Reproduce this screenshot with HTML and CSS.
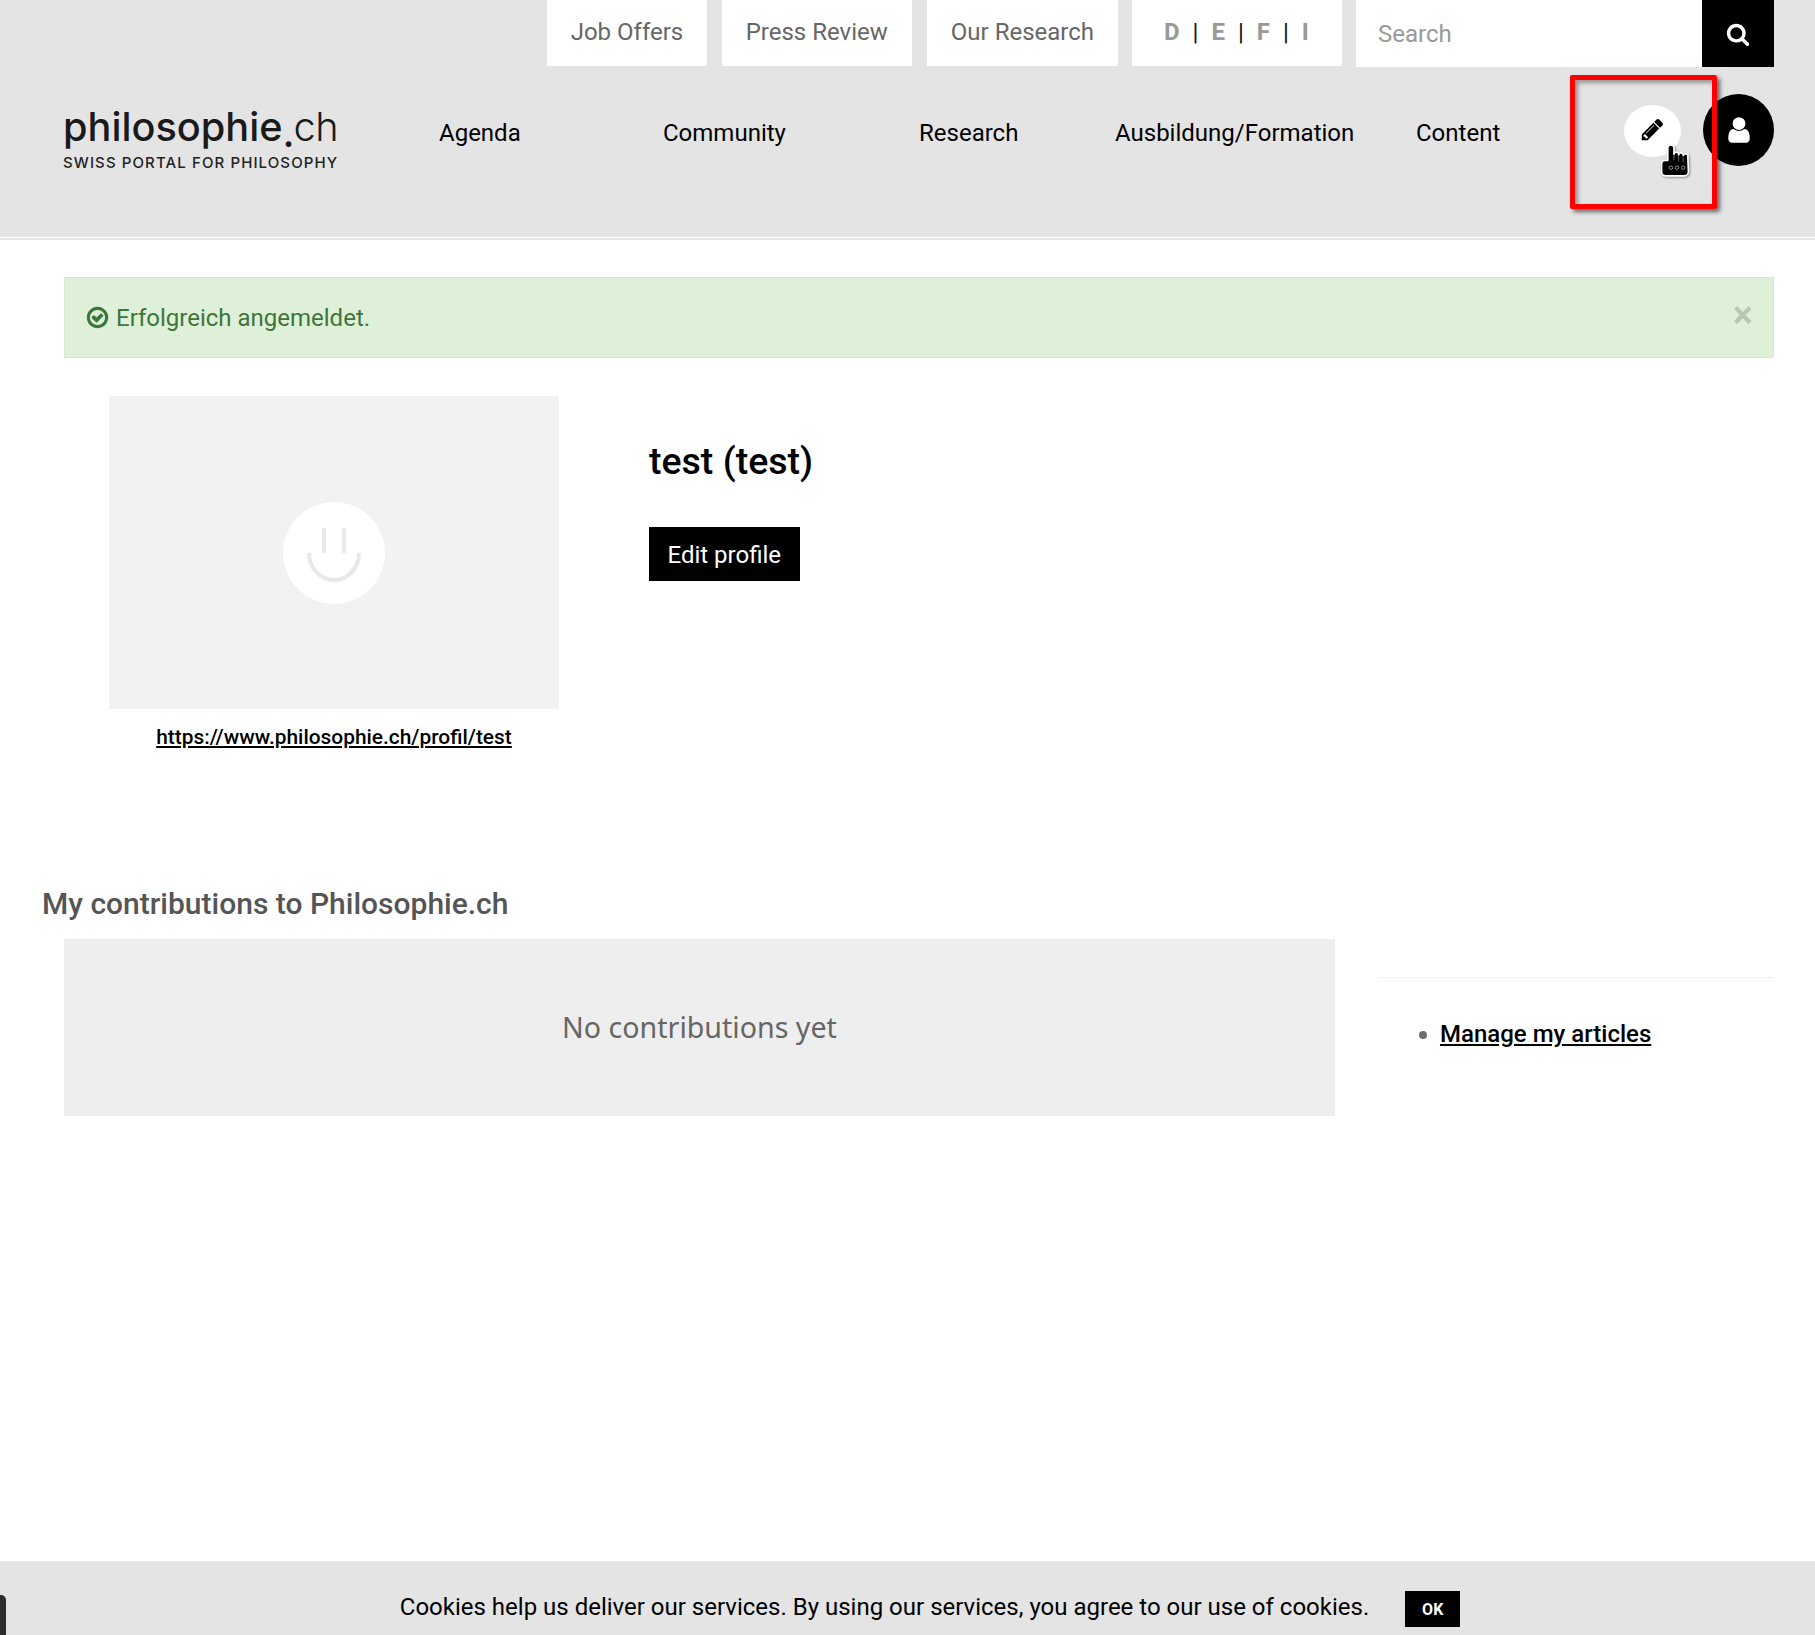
FILE: index.html
```html
<!DOCTYPE html>
<html><head><meta charset="UTF-8" /><title>philosophie.ch</title><link rel="stylesheet" href="styles.css"></head>
<body>
<header class="site-header">
	<div class="top-row">
		<a class="tab">Job Offers</a>
		<a class="tab">Press Review</a>
		<a class="tab">Our Research</a>
		<div class="tab langs"><b>D</b><i>|</i><b>E</b><i>|</i><b>F</b><i>|</i><b>I</b></div>
		<form class="search">
			<input class="search-input" type="text" placeholder="Search">
			<button class="search-btn" type="button">
				<svg width="24" height="24" viewBox="0 0 1792 1792"><path fill="#fff" d="M1216 832q0-185-131.5-316.5t-316.5-131.5-316.5 131.5-131.5 316.5 131.5 316.5 316.5 131.5 316.5-131.5 131.5-316.5zm512 832q0 52-38 90t-90 38q-54 0-90-38l-343-342q-179 124-399 124-143 0-273.5-55.5t-225-150-150-225-55.5-273.5 55.5-273.5 150-225 225-150 273.5-55.5 273.5 55.5 225 150 150 225 55.5 273.5q0 220-124 399l343 343q37 37 37 90z"/></svg>
			</button>
		</form>
	</div>
	<div class="main-row">
		<a class="logo">
			<span class="logo-name">philosophie<span class="logo-dot">.</span><span class="logo-thin">ch</span></span>
			<span class="logo-tag">SWISS PORTAL FOR PHILOSOPHY</span>
		</a>
		<nav class="nav">
			<a>Agenda</a>
			<a>Community</a>
			<a>Research</a>
			<a>Ausbildung/Formation</a>
			<a>Content</a>
		</nav>
		<a class="edit-btn">
			<svg width="25" height="25" viewBox="0 0 1792 1792"><path d="M491 1536l91-91-235-235-91 91v107h128v128h107zm523-928q0-22-22-22-10 0-17 7l-542 542q-7 7-7 17 0 22 22 22 10 0 17-7l542-542q7-7 7-17zm-54-192l416 416-832 832h-416v-416zm683 96q0 53-37 90l-166 166-416-416 166-165q36-38 90-38 53 0 91 38l235 234q37 39 37 91z"/></svg>
		</a>
		<a class="user-btn">
			<svg width="30" height="30" viewBox="0 0 1792 1792"><path fill="#fff" d="M1536 1399q0 109-62.5 187t-150.5 78h-854q-88 0-150.5-78t-62.5-187q0-85 8.5-160.5t31.5-152 58.5-131 94-89 134.5-34.5q131 128 313 128t313-128q76 0 134.5 34.5t94 89 58.5 131 31.5 152 8.5 160.5zm-256-887q0 159-112.5 271.5t-271.5 112.5-271.5-112.5-112.5-271.5 112.5-271.5 271.5-112.5 271.5 112.5 112.5 271.5z"/></svg>
		</a>
	</div>
	<!-- annotation from the screenshot -->
	<div class="red-box"></div>
	<svg class="hand" width="33" height="34" viewBox="0 0 31 33">
		<path fill="#000" stroke="#fff" stroke-width="1.6" stroke-linejoin="round" d="M8 4a3 3 0 0 1 6 0V10a2.200 2.200 0 0 1 4.500.5a2.200 2.200 0 0 1 4.500.7a2.200 2.200 0 0 1 4.500 1.500L28 27a4 4 0 0 1-4 4H6a4 4 0 0 1-4-4V19a3 3 0 0 1 3-3h3z"/>
		<path fill="none" stroke="#777" stroke-width=".8" d="M14 11v5M18.500 12v5M23 13v5"/>
		<circle cx="11" cy="23" r="1.700" fill="none" stroke="#aaa" stroke-width=".8"/><circle cx="17" cy="23" r="1.700" fill="none" stroke="#aaa" stroke-width=".8"/><circle cx="23" cy="23" r="1.700" fill="none" stroke="#aaa" stroke-width=".8"/>
	</svg>
</header>
<div class="header-rule"></div>

<div class="alert">
	<svg width="25" height="25" viewBox="0 0 1792 1792"><path fill="#3c763d" d="M1299 813l-422 422q-19 19-45 19t-45-19l-294-294q-19-19-19-45t19-45l102-102q19-19 45-19t45 19l147 147 275-275q19-19 45-19t45 19l102 102q19 19 19 45t-19 45zm141 83q0-148-73-273t-198-198-273-73-273 73-198 198-73 273 73 273 198 198 273 73 273-73 198-198 73-273zm224 0q0 209-103 385.5t-279.5 279.5-385.5 103-385.5-103-279.5-279.5-103-385.5 103-385.5 279.5-279.5 385.5-103 385.5 103 279.5 279.5 103 385.5z"/></svg>
	<span>Erfolgreich angemeldet.</span>
	<span class="alert-close">×</span>
</div>

<section class="profile">
	<div class="profile-left">
		<div class="photo">
			<div class="photo-face">
				<svg width="58" height="54" viewBox="0 0 58 54" fill="none" stroke="#e8e8e8" stroke-width="4">
					<path d="M19 0v25M39 0v25M4 25a25 27 0 0 0 50 0"/>
				</svg>
			</div>
		</div>
		<a class="profile-url">https://www.philosophie.ch/profil/test</a>
	</div>
	<div class="profile-right">
		<h1 class="profile-name">test (test)</h1>
		<a class="btn-edit">Edit profile</a>
	</div>
</section>

<h2 class="contrib-title">My contributions to Philosophie.ch</h2>
<section class="contrib">
	<div class="contrib-empty">No contributions yet</div>
	<aside class="contrib-side">
		<ul>
			<li><a>Manage my articles</a></li>
		</ul>
	</aside>
</section>

<div class="cookie-bar">
	<div class="cookie-tab"></div>
	<span>Cookies help us deliver our services. By using our services, you agree to our use of cookies.</span>
	<a class="cookie-ok">OK</a>
</div>
</body></html>
```

FILE: styles.css
```css
* { box-sizing: border-box; }
html, body { margin: 0; padding: 0; }
body { background: #fff; font-family: Roboto, sans-serif; font-size: 24px; color: #000; height: 1635px; overflow: hidden; }

.site-header { position: relative; height: 237px; background: #e4e4e4; }
.header-rule { height: 2px; margin-top: 1px; background: #e4e4e4; }

.top-row { display: flex; justify-content: flex-end; padding-right: 41px; height: 67px; }
.tab { display: flex; align-items: center; height: 66px; padding: 0 24px 2px; margin-right: 15px; background: #fff; color: #666; }
.tab:nth-child(1) { padding: 0 23.5px 2px; }
.tab:nth-child(3) { margin-right: 14px; }
.langs { width: 210px; padding-left: 32px; margin-right: 14px; gap: 13px; }
.langs b { color: #999; font-weight: 700; }
.langs i { font-style: normal; color: #111; }
.search { display: flex; margin: 0; }
.search-input { width: 346px; height: 67px; border: 0; padding: 0 22px; font: 24px Roboto, sans-serif; background: #fff; }
.search-input::placeholder { color: #999; opacity: 1; }
.search-btn { width: 72px; height: 67px; border: 0; padding: 0; background: #000; display: flex; align-items: center; justify-content: center; }

.main-row { display: flex; padding: 41px 41px 0 63px; }
.logo { display: flex; flex-direction: column; width: 376px; margin-top: -3px; margin-bottom: 3px; }
.logo-name { font-family: Inter, sans-serif; font-size: 39.7px; line-height: 44px; font-weight: 500; color: #1a1a1a; white-space: nowrap; }
.logo-dot { display: inline-block; width: 11px; transform: translateY(6px); }
.logo-thin { font-weight: 300; letter-spacing: -.5px; }
.logo-tag { font-family: Inter, sans-serif; font-size: 15px; font-weight: 500; line-height: 18px; margin-top: 5px; color: #222; letter-spacing: 1.1px; white-space: nowrap; }
.nav { display: grid; grid-template-columns: 224px 256px 196px 301px 208px; padding-top: 7px; line-height: 36px; }
.edit-btn { display: flex; align-items: center; justify-content: center; width: 57px; height: 52px; margin-top: -3px; padding-bottom: 3px; border-radius: 50%; background: #fff; }
.user-btn { display: flex; align-items: center; justify-content: center; width: 71px; height: 72px; margin: -14px 0 0 22px; border-radius: 50%; background: #000; }

.red-box { position: absolute; left: 1570px; top: 75px; width: 147px; height: 134px; border: 5px solid #f00; border-radius: 2px; box-shadow: 3px 3px 4px rgba(0,0,0,.55), inset 3px 3px 4px rgba(0,0,0,.35); }
.hand { position: absolute; left: 1659px; top: 144px; filter: drop-shadow(1px 1px 1px rgba(0,0,0,.4)); }

.alert { display: flex; align-items: center; gap: 6px; height: 81px; margin: 37px 41px 0 64px; padding: 0 23px 0 20px; background: #dff0d8; border: 1px solid #d6e9c6; color: #3c763d; }
.alert-close { margin-left: auto; margin-top: -5px; margin-right: -3px; color: #000; opacity: .17; font-size: 38px; font-weight: 700; }

.profile { display: flex; margin: 38px 0 0 109px; height: 488px; }
.profile-left { display: flex; flex-direction: column; align-items: center; width: 450px; }
.photo { display: flex; align-items: center; justify-content: center; width: 450px; height: 313px; background: #f2f2f2; }
.photo-face { display: flex; justify-content: center; width: 102px; height: 102px; border-radius: 50%; background: #fff; padding-top: 26px; }
.profile-url { margin-top: 14px; font-size: 20.9px; line-height: 28px; font-weight: 500; text-decoration: underline; color: #000; }
.profile-right { margin-left: 90px; }
.profile-name { margin: 41px 0 0; font-size: 37.5px; line-height: 48px; font-weight: 500; }
.btn-edit { display: inline-flex; align-items: center; height: 54px; margin-top: 42px; padding: 2px 18.5px 0; background: #000; color: #fff; }

.contrib-title { margin: 0 0 0 42px; font-size: 30px; line-height: 40px; font-weight: 500; color: #555; }
.contrib { display: flex; margin: 15px 41px 0 64px; }
.contrib-empty { display: flex; align-items: center; justify-content: center; width: 1271px; height: 177px; padding-bottom: 2px; background: #eee; color: #666; font-family: "Noto Sans", sans-serif; font-size: 28.6px; }
.contrib-side { margin: 38px 0 0 44px; flex: 1; border-top: 1px solid #eee; }
.contrib-side ul { margin: 38px 0 0; padding: 0 0 0 61px; list-style: none; }
.contrib-side li { position: relative; line-height: 36px; }
.contrib-side li::before { content: ""; position: absolute; left: -21px; top: 15px; width: 8px; height: 8px; border-radius: 50%; background: #6e6e6e; }
.contrib-side a { color: #000; font-weight: 500; text-decoration: underline; }

.cookie-bar { position: fixed; left: 0; right: 0; bottom: 0; height: 74px; background: #e4e4e4; display: flex; justify-content: center; padding: 30px 0 0 45px; }
.cookie-bar span { line-height: 32px; }
.cookie-ok { width: 55px; height: 36px; margin: 0 0 0 36px; display: flex; align-items: center; justify-content: center; background: #000; color: #fff; font-size: 16px; font-weight: 700; }
.cookie-tab { position: absolute; left: 0; top: 34px; width: 6px; height: 40px; background: #2b2d30; border-top-right-radius: 5px; }
```
